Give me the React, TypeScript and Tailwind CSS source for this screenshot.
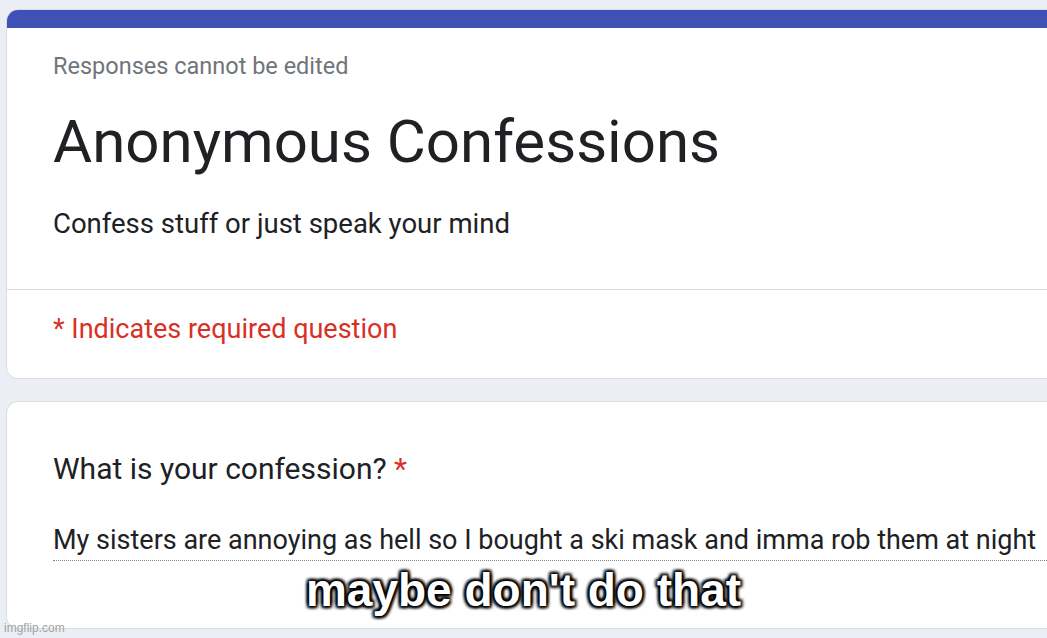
import React from "react";

export default function App() {
  return (
    <div className="relative h-[638px] w-[1047px] overflow-hidden bg-[#eceef6] font-['Roboto',sans-serif]">
      <div className="flex w-[1110px] flex-col gap-[22px] pl-[6px] pt-[9px]">
        {/* header card */}
        <div className="overflow-hidden rounded-[12px] border border-[#dadce0] bg-white">
          <div className="h-[18px] bg-[#3f51b5]" />
          <div className="px-[46px] pt-[23px] pb-[47px]">
            <div className="text-[23.5px] leading-[30px] text-[#70757a]">Responses cannot be edited</div>
            <h1 className="mt-[23px] text-[60px] leading-[76px] text-[#202124]">Anonymous Confessions</h1>
            <p className="mt-[26px] text-[27.5px] leading-[36px] text-[#202124]">Confess stuff or just speak your mind</p>
          </div>
          <div className="border-t border-[#dadce0] px-[46px] pt-[21px] pb-[31px]">
            <div className="text-[27px] leading-[36px] text-[#d93025]">* Indicates required question</div>
          </div>
        </div>

        {/* question card */}
        <div className="h-[228px] rounded-[12px] border border-[#dadce0] bg-white pl-[46px] pt-[47px]">
          <div className="text-[30px] leading-[40px] text-[#202124]">
            What is your confession? <span className="text-[#d93025]">*</span>
          </div>
          <div className="mt-[33px] border-b border-dotted border-[#80868b] pb-[2px] text-[27px] leading-[36px] text-[#202124]">
            My sisters are annoying as hell so I bought a ski mask and imma rob them at night
          </div>
        </div>
      </div>

      {/* meme caption */}
      <div className="absolute left-0 right-0 top-[564px] text-center font-['Liberation_Sans',Arial,sans-serif] text-[46px] font-bold leading-[52px] text-white [text-shadow:2px_2px_3px_#000,-2px_-2px_3px_#000,2px_-2px_3px_#000,-2px_2px_3px_#000,0_0_4px_#000]">
        maybe don't do that
      </div>

      {/* watermark */}
      <div className="absolute bottom-[3px] left-[4px] font-['Liberation_Sans',Arial,sans-serif] text-[12px] leading-[14px] text-[#a3a3a3]">
        imgflip.com
      </div>
    </div>
  );
}
